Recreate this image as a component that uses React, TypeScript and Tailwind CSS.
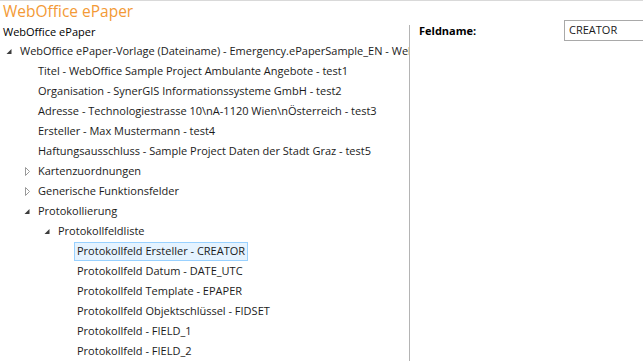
import React from "react";

type Node = {
  label: string;
  depth: number;
  state?: "open" | "closed";
  selected?: boolean;
};

const nodes: Node[] = [
  { label: "WebOffice ePaper-Vorlage (Dateiname) - Emergency.ePaperSample_EN - WebOffice ePaper", depth: 0, state: "open" },
  { label: "Titel - WebOffice Sample Project Ambulante Angebote - test1", depth: 1 },
  { label: "Organisation - SynerGIS Informationssysteme GmbH - test2", depth: 1 },
  { label: "Adresse - Technologiestrasse 10\\nA-1120 Wien\\nÖsterreich - test3", depth: 1 },
  { label: "Ersteller - Max Mustermann - test4", depth: 1 },
  { label: "Haftungsausschluss - Sample Project Daten  der Stadt Graz - test5", depth: 1 },
  { label: "Kartenzuordnungen", depth: 1, state: "closed" },
  { label: "Generische Funktionsfelder", depth: 1, state: "closed" },
  { label: "Protokollierung", depth: 1, state: "open" },
  { label: "Protokollfeldliste", depth: 2, state: "open" },
  { label: "Protokollfeld Ersteller - CREATOR", depth: 3, selected: true },
  { label: "Protokollfeld Datum - DATE_UTC", depth: 3 },
  { label: "Protokollfeld Template - EPAPER", depth: 3 },
  { label: "Protokollfeld Objektschlüssel - FIDSET", depth: 3 },
  { label: "Protokollfeld - FIELD_1", depth: 3 },
  { label: "Protokollfeld - FIELD_2", depth: 3 },
];

// left padding per depth (expander column is 14px wide, deepest leaves have none)
const indent = ["pl-[6px]", "pl-[24px]", "pl-[44px]", "pl-[77px]"];

const Expander = ({ state }: { state?: "open" | "closed" }) => {
  if (state === "open") {
    return (
      <svg width="14" height="20" viewBox="0 0 14 20" className="shrink-0">
        <polygon points="5.5,8 5.5,13 0.5,13" fill="#3c3c3c" />
      </svg>
    );
  }
  if (state === "closed") {
    return (
      <svg width="14" height="20" viewBox="0 0 14 20" className="shrink-0">
        <polygon points="1.5,6.5 1.5,14.5 5.5,10.5" fill="none" stroke="#9a9a9a" />
      </svg>
    );
  }
  return <span className="w-[14px] shrink-0" />;
};

const TreeRow = ({ node }: { node: Node }) => (
  <div className={`flex h-[20px] items-center whitespace-nowrap ${indent[node.depth]}`}>
    {node.depth < 3 && <Expander state={node.state} />}
    <span
      className={
        node.selected
          ? "ml-[-3px] flex h-[19px] items-center border border-[#99d1ff] bg-[#e5f3ff] px-[2px]"
          : "flex h-[19px] items-center"
      }
    >
      {node.label}
    </span>
  </div>
);

export default function App() {
  return (
    <div className="h-[362px] w-[643px] overflow-hidden border-t border-[#d9d9d9] bg-white font-['Open_Sans',sans-serif] text-[11px] text-[#1b1b1b]">
      <div className="h-[21px] pl-[3px] text-[15.5px] leading-[20px] text-[#f39a36]">WebOffice ePaper</div>
      <div className="flex">
        <div className="w-[409px] overflow-hidden">
          <div className="pl-[3px] leading-[19px] text-black">WebOffice ePaper</div>
          <div>
            {nodes.map((n, i) => (
              <TreeRow key={i} node={n} />
            ))}
          </div>
        </div>
        <div className="mt-[3px] w-px self-stretch bg-[#b4b4b4]" />
        <div className="flex-1">
          <div className="flex items-center">
            <div className="w-[154px] pl-[9px] font-bold text-black">Feldname:</div>
            <div className="mt-[-2px] flex h-[21px] flex-1 items-center border border-r-0 border-[#a9a9a9] pl-[4px] text-[#1b1b1b]">
              CREATOR
            </div>
          </div>
        </div>
      </div>
    </div>
  );
}
